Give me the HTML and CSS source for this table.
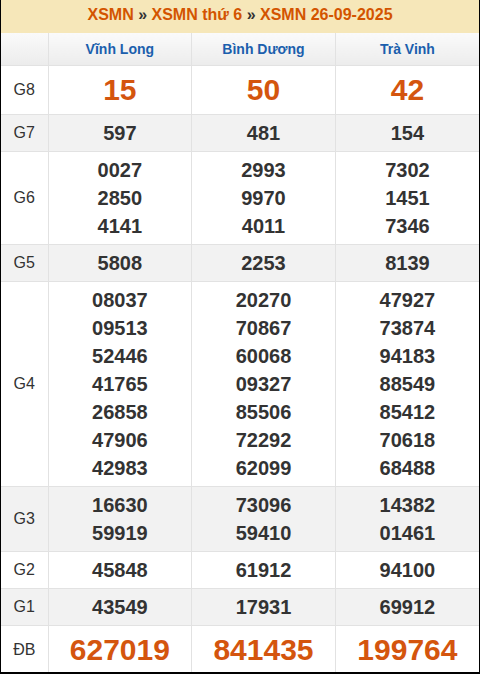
FILE: index.html
```html
<!DOCTYPE html>
<html lang="vi">
<head>
<meta charset="utf-8">
<link rel="stylesheet" href="styles.css">
</head>
<body>
<div class="frame">
  <div class="title"><span>XSMN</span> <b class="sep">»</b> <span>XSMN thứ 6</span> <b class="sep">»</b> <span>XSMN 26-09-2025</span></div>
  <table class="kq">
    <colgroup><col class="c0"><col class="c1"><col class="c1"><col class="c1"></colgroup>
    <thead>
      <tr class="hd"><th></th><th>Vĩnh Long</th><th>Bình Dương</th><th>Trà Vinh</th></tr>
    </thead>
    <tbody>
      <tr class="big"><td class="lb">G8</td><td>15</td><td>50</td><td>42</td></tr>
      <tr class="alt"><td class="lb">G7</td><td>597</td><td>481</td><td>154</td></tr>
      <tr><td class="lb">G6</td><td><div>0027</div><div>2850</div><div>4141</div></td><td><div>2993</div><div>9970</div><div>4011</div></td><td><div>7302</div><div>1451</div><div>7346</div></td></tr>
      <tr class="alt"><td class="lb">G5</td><td>5808</td><td>2253</td><td>8139</td></tr>
      <tr><td class="lb">G4</td>
        <td><div>08037</div><div>09513</div><div>52446</div><div>41765</div><div>26858</div><div>47906</div><div>42983</div></td>
        <td><div>20270</div><div>70867</div><div>60068</div><div>09327</div><div>85506</div><div>72292</div><div>62099</div></td>
        <td><div>47927</div><div>73874</div><div>94183</div><div>88549</div><div>85412</div><div>70618</div><div>68488</div></td></tr>
      <tr class="alt"><td class="lb">G3</td><td><div>16630</div><div>59919</div></td><td><div>73096</div><div>59410</div></td><td><div>14382</div><div>01461</div></td></tr>
      <tr><td class="lb">G2</td><td>45848</td><td>61912</td><td>94100</td></tr>
      <tr class="alt"><td class="lb">G1</td><td>43549</td><td>17931</td><td>69912</td></tr>
      <tr class="big db"><td class="lb">ĐB</td><td>627019</td><td>841435</td><td>199764</td></tr>
    </tbody>
  </table>
</div>
</body>
</html>
```
FILE: styles.css
```css
html, body { margin: 0; padding: 0; background: #fff; }
body { font-family: "Liberation Sans", Arial, sans-serif; color: #333; }
.frame {
  width: 480px;
  height: 674px;
  box-sizing: border-box;
  border-left: 1px solid #000;
  border-right: 1px solid #000;
  border-bottom: 2px solid #000;
  overflow: hidden;
}
.title {
  height: 33px;
  background: #f6e7b9;
  text-align: center;
  font-weight: bold;
  font-size: 16px;
  line-height: 30px;
  color: #d35400;
}
.title .sep { color: #333; }
.kq {
  width: 100%;
  border-collapse: collapse;
  table-layout: fixed;
}
.c0 { width: 47px; }
.kq th, .kq td {
  border: 1px solid #e2e2e2;
  text-align: center;
  padding: 4px 0;
  vertical-align: middle;
}
.kq tr:first-child th { border-top: 0; }
.kq th:first-child, .kq td:first-child { border-left: 0; }
.kq th:last-child, .kq td:last-child { border-right: 0; }
.kq tbody tr:last-child td { border-bottom: 0; }
.hd th {
  height: 24px;
  background: linear-gradient(#fafafa, #ececec);
  color: #1b5fad;
  font-size: 14px;
  font-weight: bold;
}
.kq td {
  font-size: 20px;
  font-weight: bold;
  line-height: 28px;
  color: #333;
}
.kq td.lb {
  font-size: 16px;
  font-weight: normal;
  color: #333;
}
.alt td { background: #f2f2f2; }
.big td {
  height: 40px;
  font-size: 30px;
  color: #d4550e;
  line-height: 40px;
}
.big td.lb { color: #333; }
.db td { height: 38px; }
```
